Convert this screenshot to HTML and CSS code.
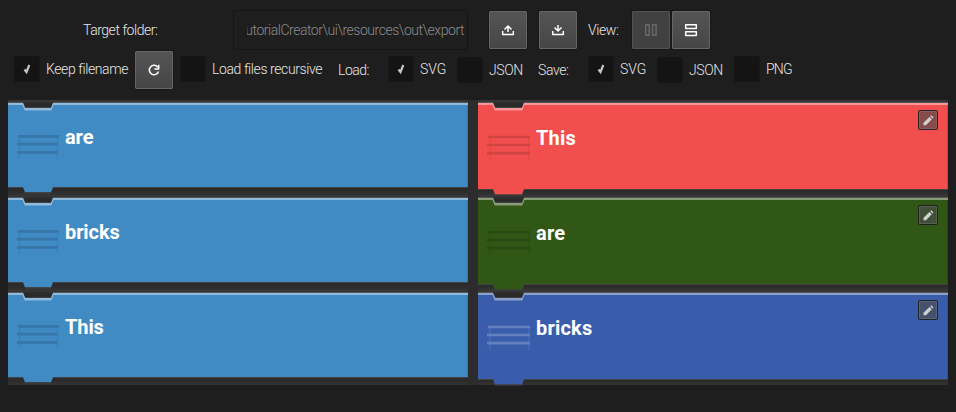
FILE: index.html
```html
<!DOCTYPE html>
<html lang="en">
<head>
<meta charset="utf-8">
<title>Bricks</title>
<link rel="stylesheet" href="styles.css">
</head>
<body>
<svg class="defs" width="0" height="0">
  <symbol id="brick-left" viewBox="0 0 460 95">
    <path class="edge" d="M0 2H15L17 7H43L45 2H460V88H45L43 93.500H17L15 88H0Z"/>
    <path class="fill" d="M0 3H15L17 8H43L45 3H460V87H45L43 92H17L15 87H0Z"/>
    <path class="shine" d="M0 2.700H15L17.300 8H43L45 2.700H460V5H45.500L43.300 10.500H16.700L14.500 5H0Z"/>
    <path class="side" d="M459.500 5V87"/>
    <path class="grip" d="M10 36.300H51M9 44.200H50M9 52.300H50"/>
    <path class="grip-side" d="M11.500 38V59M49.500 38V59"/>
  </symbol>
  <symbol id="brick-right" viewBox="0 0 470 95">
    <path class="edge" d="M0 2H15L17 7H44L46 2H470V90H46L44 95.500H17L15 90H0Z"/>
    <path class="fill" d="M0 3H15L17 8H44L46 3H470V89H46L44 94.300H17L15 89H0Z"/>
    <path class="shine" d="M0 2.700H15L17.300 8H44L46 2.700H470V5H46.500L44.300 10.500H16.700L14.500 5H0Z"/>
    <path class="side" d="M469.500 5V89"/>
    <path class="grip" d="M10 37H52M9 45H52M9 53.200H52"/>
    <path class="grip-side" d="M12 38V60M51 38V60"/>
  </symbol>
  <symbol id="pencil" viewBox="0 0 18 18"><path d="M4.500 14.200V11.800L10.500 6L12.800 8.300L7 14.200ZM11.200 5.300L12.300 4.300L14.500 6.500L13.500 7.600Z"/></symbol>
  <symbol id="check" viewBox="0 0 26 26"><path d="M10.500 13.500L12.500 16L15.300 9" fill="none" stroke="#c4c4c4" stroke-width="2.200"/></symbol>
</svg>

<header>
  <div class="bar bar-top">
    <span class="text target tight">Target folder:</span>
    <div class="field"><div class="clip tight"><span>utorialCreator\ui\resources\out\export</span></div></div>
    <button class="btn upload" aria-label="Load"><svg width="36" height="36"><path d="M12.700 19V22.500H23.300V19M18 20V14.500M14.500 17.500L18 14L21.500 17.500"/></svg></button>
    <button class="btn download" aria-label="Save"><svg width="36" height="36"><path d="M12.700 19V22.500H23.300V19M18 13V18.500M14.500 15.500L18 19L21.500 15.500"/></svg></button>
    <span class="text view">View:</span>
    <button class="btn columns" aria-label="Columns" disabled><svg width="36" height="36"><path d="M12.700 12.700H16.200V23.300H12.700ZM19.600 12.700H23.100V23.300H19.600Z"/></svg></button>
    <button class="btn rows" aria-label="Rows"><svg width="36" height="36"><path d="M12.700 12.700H23.300V16.500H12.700ZM12.700 19.700H23.300V23.500H12.700Z"/></svg></button>
  </div>
  <div class="bar bar-options">
    <span class="box"><svg><use href="#check"/></svg></span><span class="text keep tight">Keep filename</span>
    <button class="btn" aria-label="Refresh"><svg width="36" height="36"><path d="M21.800 15.200A4.700 4.700 0 1 0 22.500 19.500M22.700 12.700V17H18.400"/></svg></button>
    <span class="box recursive-box"></span><span class="text recursive tight">Load files recursive</span>
    <span class="text low load">Load:</span>
    <span class="box"><svg><use href="#check"/></svg></span><span class="text svg-label">SVG</span>
    <span class="box low"></span><span class="text low json-label">JSON</span>
    <span class="text low save">Save:</span>
    <span class="box"><svg><use href="#check"/></svg></span><span class="text svg-label">SVG</span>
    <span class="box low"></span><span class="text low json-label second">JSON</span>
    <span class="box"></span><span class="text png">PNG</span>
  </div>
</header>

<main>
  <div class="column left">
    <article class="brick sky"><svg class="shape"><use href="#brick-left"/></svg><strong>are</strong></article>
    <article class="brick sky"><svg class="shape"><use href="#brick-left"/></svg><strong>bricks</strong></article>
    <article class="brick sky"><svg class="shape"><use href="#brick-left"/></svg><strong>This</strong></article>
  </div>
  <div class="column right">
    <article class="brick red"><svg class="shape"><use href="#brick-right"/></svg><strong>This</strong><button class="edit" aria-label="Edit"><svg><use href="#pencil"/></svg></button></article>
    <article class="brick green"><svg class="shape"><use href="#brick-right"/></svg><strong>are</strong><button class="edit" aria-label="Edit"><svg><use href="#pencil"/></svg></button></article>
    <article class="brick blue"><svg class="shape"><use href="#brick-right"/></svg><strong>bricks</strong><button class="edit" aria-label="Edit"><svg><use href="#pencil"/></svg></button></article>
  </div>
</main>
</body>
</html>
```
FILE: styles.css
```css
* { box-sizing: border-box; }
body {
  margin: 0;
  height: 412px;
  overflow: hidden;
  background: #1e1e1e;
  color: #e6e6e6;
  font: 300 14px/20px Roboto, sans-serif;
}
.defs { display: block; height: 0; }
header { height: 100px; padding-top: 10px; }
.bar { display: flex; align-items: center; height: 40px; }
.bar-options { padding-left: 14px; }
.text { flex: none; white-space: nowrap; }
.target { width: 150px; margin-left: 83px; }
.tight { letter-spacing: -.41px; }
.target.tight { letter-spacing: -.46px; }
.clip.tight { letter-spacing: -.47px; }
.field {
  flex: none;
  width: 235px;
  height: 40px;
  padding: 9px 3px 9px 13px;
  border: 1px solid #151515;
  border-radius: 2px;
  color: #8c8c8c;
}
.clip { display: flex; justify-content: flex-end; overflow: hidden; white-space: nowrap; }
.btn {
  flex: none;
  width: 38px;
  height: 38px;
  padding: 0;
  border: 1px solid #666;
  border-radius: 1px;
  background: linear-gradient(#545454, #464646);
  box-shadow: 0 0 0 1px #181818;
}
.btn svg { display: block; fill: none; stroke: #fff; stroke-width: 1.500; stroke-linejoin: round; }
.upload { margin-left: 21px; }
.download { margin-left: 12px; }
.view { width: 44px; margin-left: 11px; letter-spacing: -.4px; }
.rows { margin-left: 2px; }
.columns { border-color: #535353; background: #414141; }
.btn.columns svg { stroke: #696969; }
.box { flex: none; width: 26px; height: 26px; margin-right: 6px; background: #141414; box-shadow: inset 0 0 0 1px #171717; }
.box svg { display: block; width: 26px; height: 26px; }
.bar-options .box { margin-top: -2px; }
.bar-options .box.low { margin-top: 0; }
.bar-options .text { margin-top: -2px; }
.bar-options .text.low { margin-top: 0; }
.keep { width: 89px; }
.recursive-box { margin-left: 7px; }
.recursive { width: 126px; }
.load { width: 50px; letter-spacing: -.5px; }
.svg-label { width: 37px; }
.json-label { width: 49px; letter-spacing: -.4px; }
.save { width: 50px; letter-spacing: -.4px; }
.second { width: 45px; }
.png { letter-spacing: -.8px; }

main { display: flex; gap: 10px; width: 940px; height: 285px; margin-left: 8px; background: #2c2c2c; }
.left { width: 460px; }
.right { width: 470px; }
.brick {
  position: relative;
  height: 95px;
  padding: 25px 0 0 57px;
  background: linear-gradient(#373737 0 1px, #303030 2px, #2b2b2b 4px 91px, #333 95px);
  color: #fff;
}
.right .brick { padding: 26px 0 0 58px; }
.brick strong { position: relative; display: block; font: 700 20px/24px Roboto, sans-serif; letter-spacing: -.1px; }
.right .brick strong { letter-spacing: .2px; }
.shape { position: absolute; inset: 0; width: 100%; height: 95px; overflow: visible; }
symbol { overflow: visible; }
.edge { fill: #424242; }
.fill { fill: var(--color); }
.shine { fill: #fff; fill-opacity: .42; }
.side { fill: none; stroke: #000; stroke-opacity: .15; }
.grip { fill: none; stroke: var(--grip); stroke-width: 2.700; }
.grip-side { fill: none; stroke: var(--grip); stroke-opacity: .6; }
.sky { --color: #418bc5; --grip: #3676a8; }
.red { --color: #f34e4e; --grip: #cf4343; }
.green { --color: #305716; --grip: #294b13; }
.blue { --color: #395cab; --grip: #6681bf; }
.edit {
  position: absolute;
  top: 10px;
  right: 10px;
  width: 20px;
  height: 20px;
  padding: 0;
  border: 1px solid rgba(20, 20, 20, .75);
  border-radius: 2px;
  background: rgba(75, 75, 75, .65);
  box-shadow: inset 0 0 0 1px rgba(150, 150, 150, .25);
}
.edit svg { display: block; width: 18px; height: 18px; fill: #d0d0d0; }
```
